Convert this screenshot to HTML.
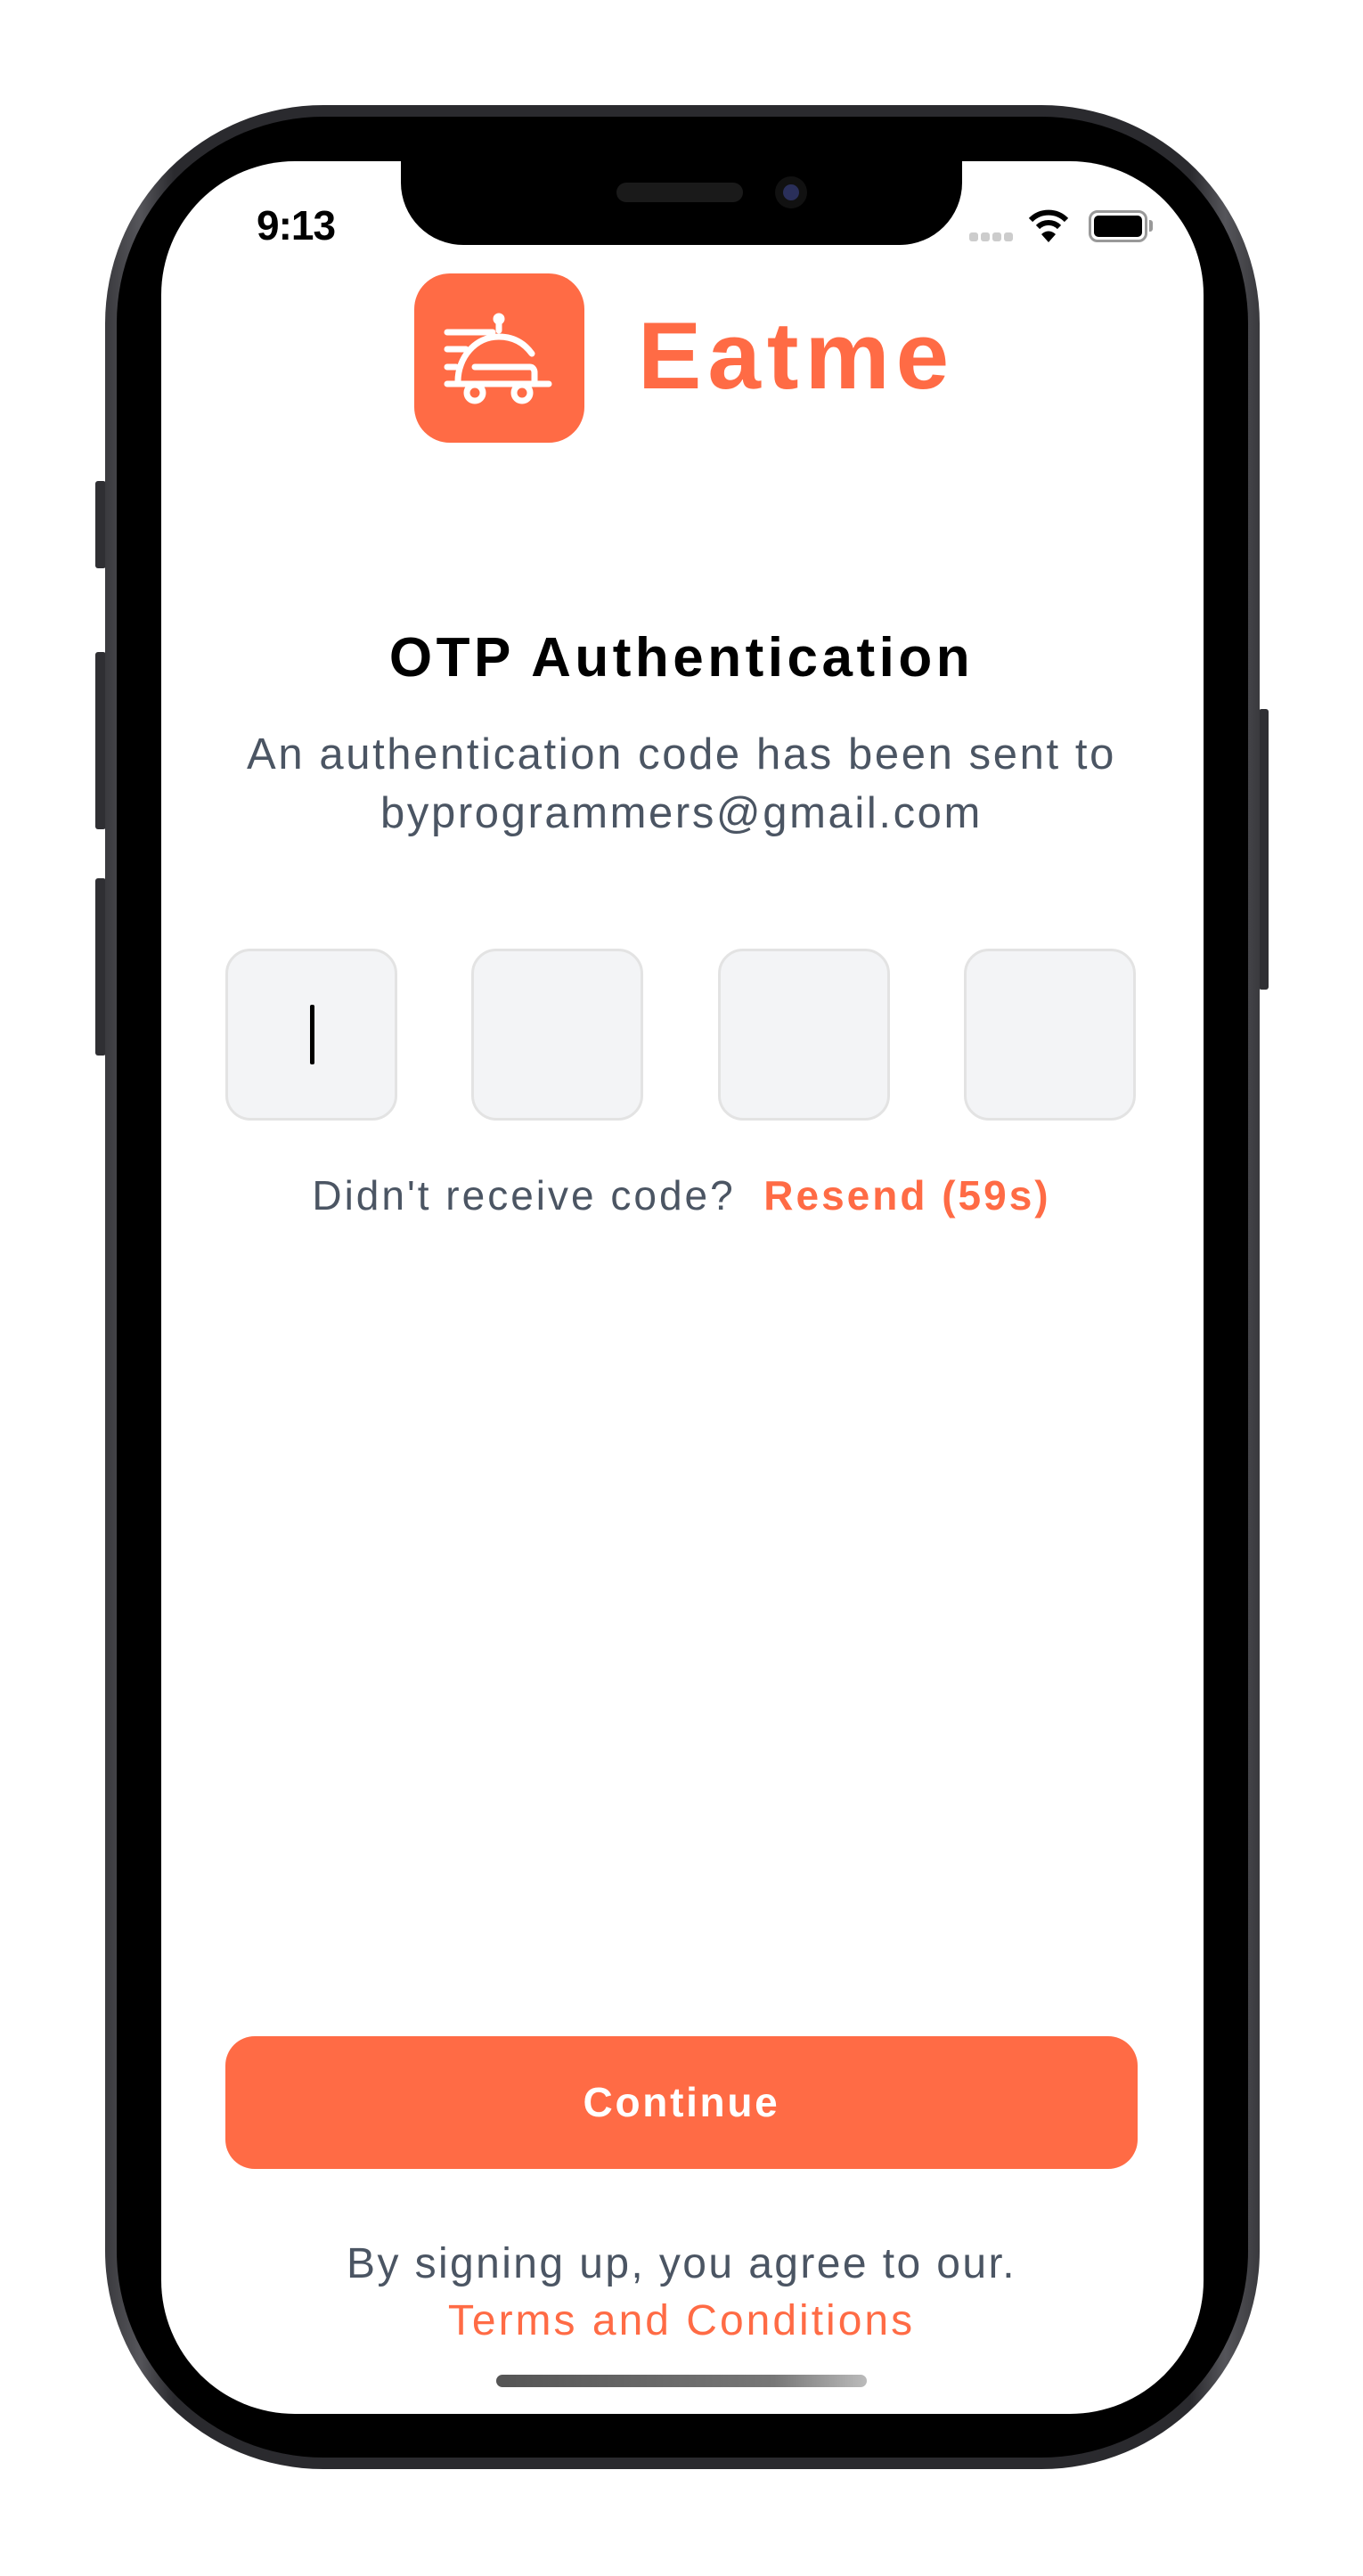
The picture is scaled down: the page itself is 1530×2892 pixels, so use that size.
<!DOCTYPE html>
<html><head><meta charset="utf-8">
<style>
*{margin:0;padding:0;box-sizing:border-box}
html,body{width:1530px;height:2892px;background:#fff;overflow:hidden;font-family:"Liberation Sans",sans-serif}
.abs{position:absolute}
.frame{left:118px;top:118px;width:1296px;height:2654px;border-radius:245px;background:linear-gradient(90deg,#3a3a3e,#55555a 3%,#2a2a2e 6%,#2a2a2e 94%,#55555a 97%,#3a3a3e)}
.bezel{left:131px;top:131px;width:1270px;height:2628px;border-radius:232px;background:#000}
.screen{left:181px;top:181px;width:1170px;height:2529px;border-radius:150px;background:#fff;overflow:hidden}
.notch{left:450px;top:170px;width:630px;height:105px;background:#000;border-radius:0 0 70px 70px}
.btn{background:#2f2f33;border-radius:3px}
.c{text-align:center;left:0;width:1530px;white-space:nowrap}
</style></head><body>
<div class="abs btn" style="left:107px;top:540px;width:12px;height:98px"></div>
<div class="abs btn" style="left:107px;top:732px;width:12px;height:199px"></div>
<div class="abs btn" style="left:107px;top:986px;width:12px;height:199px"></div>
<div class="abs btn" style="left:1413px;top:796px;width:11px;height:315px"></div>
<div class="abs frame"></div>
<div class="abs bezel"></div>
<div class="abs screen"></div>
<div class="abs notch"></div>
<div class="abs" style="left:692px;top:205px;width:142px;height:22px;border-radius:11px;background:#1a1a1a"></div>
<div class="abs" style="left:870px;top:198px;width:36px;height:36px;border-radius:50%;background:#111"><div style="margin:9px;width:18px;height:18px;border-radius:50%;background:#2a2f5a"></div></div>

<div class="abs" style="left:288px;top:226px;font-size:46px;font-weight:bold;color:#000;letter-spacing:-1px">9:13</div>
<div class="abs" style="left:1088px;top:261px;width:10px;height:10px;border-radius:3px;background:#ccc"></div>
<div class="abs" style="left:1101px;top:261px;width:10px;height:10px;border-radius:3px;background:#ccc"></div>
<div class="abs" style="left:1114px;top:261px;width:10px;height:10px;border-radius:3px;background:#ccc"></div>
<div class="abs" style="left:1127px;top:261px;width:10px;height:10px;border-radius:3px;background:#ccc"></div>
<svg class="abs" style="left:1154px;top:234px" width="46" height="40" viewBox="0 0 46 40"><path d="M3 13 A28 28 0 0 1 43 13" stroke="#000" stroke-width="6" fill="none"/><path d="M11 21 A17 17 0 0 1 35 21" stroke="#000" stroke-width="6" fill="none"/><path d="M23 38 L15 29 A11 11 0 0 1 31 29 Z" fill="#000"/></svg>
<div class="abs" style="left:1222px;top:236px;width:66px;height:36px;border:3px solid #999;border-radius:10px;padding:3px"><div style="width:100%;height:100%;background:#000;border-radius:5px"></div></div>
<div class="abs" style="left:1290px;top:247px;width:4px;height:13px;background:#999;border-radius:0 3px 3px 0"></div>

<div class="abs" style="left:465px;top:307px;width:191px;height:190px;border-radius:40px;background:#ff6b45"></div>
<svg class="abs" style="left:465px;top:307px" width="190" height="190" viewBox="0 0 190 190" fill="none" stroke="#fff" stroke-width="7" stroke-linecap="round" stroke-linejoin="round">
<path d="M95 49 V64"/><circle cx="95" cy="51" r="3" fill="#fff"/>
<path d="M37 66 H88"/><path d="M37 85 H58"/><path d="M37 105 H47"/>
<path d="M49 121 C49 95 68 71 95 71 C112 71 124 79 132 90"/>
<path d="M68 105 H130 C133 105 135 108 135 111 V121"/>
<path d="M37 124 H151"/>
<circle cx="68" cy="134" r="9"/><circle cx="121" cy="134" r="9"/>
</svg>
<div class="abs" style="left:716px;top:346px;font-size:107px;font-weight:bold;color:#ff6b45;line-height:1;letter-spacing:7px">Eatme</div>

<div class="abs c" style="top:702px;font-size:62px;font-weight:bold;color:#000;line-height:74px;letter-spacing:4.5px">OTP Authentication</div>
<div class="abs c" style="top:814px;font-size:49px;color:#4b5563;line-height:66px;letter-spacing:2.6px">An authentication code has been sent to<br>byprogrammers@gmail.com</div>

<div class="abs" style="left:253px;top:1065px;width:193px;height:193px;border-radius:28px;background:#f3f4f6;border:3px solid #e3e3e3"></div>
<div class="abs" style="left:529px;top:1065px;width:193px;height:193px;border-radius:28px;background:#f3f4f6;border:3px solid #e3e3e3"></div>
<div class="abs" style="left:806px;top:1065px;width:193px;height:193px;border-radius:28px;background:#f3f4f6;border:3px solid #e3e3e3"></div>
<div class="abs" style="left:1082px;top:1065px;width:193px;height:193px;border-radius:28px;background:#f3f4f6;border:3px solid #e3e3e3"></div>
<div class="abs" style="left:348px;top:1128px;width:5px;height:67px;border-radius:2px;background:#000"></div>

<div class="abs c" style="top:1312px;font-size:46px;line-height:60px;color:#4b5563;letter-spacing:3px">Didn't receive code?&nbsp; <span style="color:#ff6b45;font-weight:bold">Resend (59s)</span></div>

<div class="abs" style="left:253px;top:2286px;width:1024px;height:149px;border-radius:33px;background:#ff6b45;color:#fff;font-weight:bold;font-size:46px;text-align:center;line-height:149px;letter-spacing:2.7px">Continue</div>

<div class="abs c" style="top:2510px;font-size:48px;line-height:64px;color:#4b5563;letter-spacing:2.4px">By signing up, you agree to our.<br><span style="color:#ff6b45;letter-spacing:3px">Terms and Conditions</span></div>

<div class="abs" style="left:557px;top:2666px;width:416px;height:14px;border-radius:7px;background:linear-gradient(90deg,#555,#777 75%,#bbb)"></div>
</body></html>
